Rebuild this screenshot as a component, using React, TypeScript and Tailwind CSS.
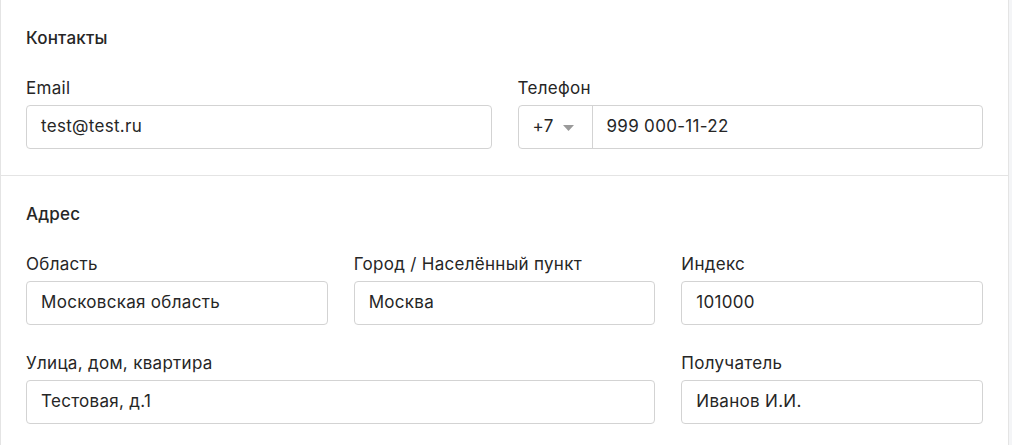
import type { ReactNode } from "react";

const font = { fontFamily: "Inter, 'Noto Sans', sans-serif" };

function Field({
  label,
  children,
  className = "",
}: {
  label: string;
  children: ReactNode;
  className?: string;
}) {
  return (
    <div className={`flex min-w-0 flex-col ${className}`}>
      <span className="mb-[5px] text-[17px] leading-6 tracking-[0.3px] text-[#262626]">{label}</span>
      {children}
    </div>
  );
}

function TextInput({ value }: { value: string }) {
  return (
    <div className="flex h-[44px] items-center rounded-[4px] border border-[#d3d3d3] bg-white px-[14px] text-[17px] tracking-[0.3px] text-[#262626]">
      {value}
    </div>
  );
}

function PhoneInput({ code, value }: { code: string; value: string }) {
  return (
    <div className="flex h-[44px] items-stretch rounded-[4px] border border-[#d3d3d3] bg-white text-[17px] tracking-[0.3px] text-[#262626]">
      <div className="flex w-[74px] shrink-0 items-center gap-[9px] border-r border-[#d3d3d3] pl-[14px]">
        <span>{code}</span>
        <svg width="11" height="6" viewBox="0 0 11 6" className="mt-[2px]">
          <path d="M0 0h11L5.5 6z" fill="#9a9a9a" />
        </svg>
      </div>
      <div className="flex items-center pl-[14px]">{value}</div>
    </div>
  );
}

function Section({ title, children }: { title: string; children: ReactNode }) {
  return (
    <section className="px-[25px] pt-[26px] pb-[26px]">
      <h2 className="mb-[26px] text-[17px] font-medium leading-6 tracking-[0.2px] text-[#262626]">{title}</h2>
      {children}
    </section>
  );
}

export default function App() {
  return (
    <div className="flex h-[445px] w-full bg-[#f4f5f7]" style={font}>
      <div className="w-[1009px] shrink-0 border-x border-[#e4e4e4] bg-white">
        <Section title="Контакты">
          <div className="grid grid-cols-2 gap-[26px]">
            <Field label="Email">
              <TextInput value="test@test.ru" />
            </Field>
            <Field label="Телефон">
              <PhoneInput code="+7" value="999 000-11-22" />
            </Field>
          </div>
        </Section>
        <div className="h-px bg-[#e4e4e4]" />
        <Section title="Адрес">
          <div className="grid grid-cols-3 gap-[26px]">
            <Field label="Область">
              <TextInput value="Московская область" />
            </Field>
            <Field label="Город / Населённый пункт">
              <TextInput value="Москва" />
            </Field>
            <Field label="Индекс">
              <TextInput value="101000" />
            </Field>
            <Field label="Улица, дом, квартира" className="col-span-2">
              <TextInput value="Тестовая, д.1" />
            </Field>
            <Field label="Получатель">
              <TextInput value="Иванов И.И." />
            </Field>
          </div>
        </Section>
      </div>
    </div>
  );
}
